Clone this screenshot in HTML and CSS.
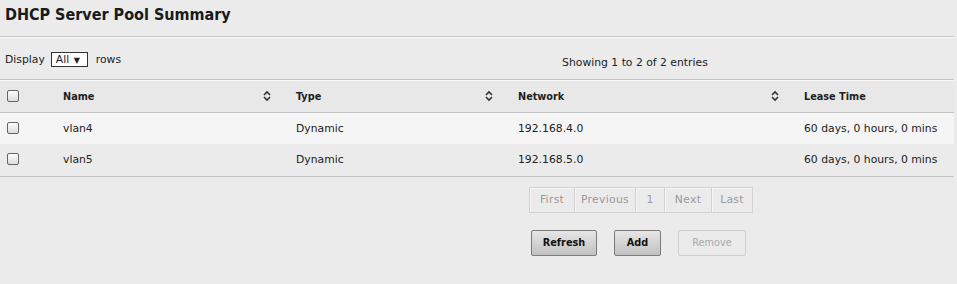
FILE: index.html
```html
<!DOCTYPE html>
<html>
<head lang="en">
    <meta charset="UTF-8">
    <title>DHCP Server Pool Summary</title>
    <link rel="stylesheet" href="styles.css">
</head>
<body>
<div class="page">
    <h1 class="title">DHCP Server Pool Summary</h1>

    <div class="toolbar">
        <div class="length">
            Display
            <span class="select">All <span class="caret">&#9660;</span></span>
            rows
        </div>
        <div class="info">Showing 1 to 2 of 2 entries</div>
    </div>

    <table class="grid">
        <colgroup>
            <col class="c-check">
            <col class="c-name">
            <col class="c-type">
            <col class="c-net">
            <col class="c-lease">
        </colgroup>
        <thead>
        <tr>
            <th><span class="box"></span></th>
            <th>Name
                <svg class="sort" width="8" height="12" viewBox="0 0 8 12"><path d="M1 5 L4 2 L7 5 M1 7 L4 10 L7 7" fill="none" stroke="#333" stroke-width="1.6"/></svg>
            </th>
            <th>Type
                <svg class="sort" width="8" height="12" viewBox="0 0 8 12"><path d="M1 5 L4 2 L7 5 M1 7 L4 10 L7 7" fill="none" stroke="#333" stroke-width="1.6"/></svg>
            </th>
            <th>Network
                <svg class="sort" width="8" height="12" viewBox="0 0 8 12"><path d="M1 5 L4 2 L7 5 M1 7 L4 10 L7 7" fill="none" stroke="#333" stroke-width="1.6"/></svg>
            </th>
            <th>Lease Time</th>
        </tr>
        </thead>
        <tbody>
        <tr class="odd">
            <td><span class="box"></span></td>
            <td>vlan4</td>
            <td>Dynamic</td>
            <td>192.168.4.0</td>
            <td>60 days, 0 hours, 0 mins</td>
        </tr>
        <tr class="even">
            <td><span class="box"></span></td>
            <td>vlan5</td>
            <td>Dynamic</td>
            <td>192.168.5.0</td>
            <td>60 days, 0 hours, 0 mins</td>
        </tr>
        </tbody>
    </table>

    <div class="pager">
        <span class="p-first">First</span>
        <span class="p-prev">Previous</span>
        <span class="p-num">1</span>
        <span class="p-next">Next</span>
        <span class="p-last">Last</span>
    </div>

    <div class="actions">
        <button class="btn b-refresh">Refresh</button>
        <button class="btn b-add">Add</button>
        <button class="btn b-remove disabled">Remove</button>
    </div>
</div>
</body>
</html>
```

FILE: styles.css
```css
* {
    padding: 0;
    margin: 0;
    box-sizing: border-box;
}

body {
    background-color: #ebebeb;
    font-family: "DejaVu Sans", Verdana, sans-serif;
    font-size: 10.8px;
    color: #222;
}

.page {
    width: 954px;
    height: 284px;
    background-color: #ebebeb;
}

.title {
    font-size: 16px;
    font-weight: bold;
    font-stretch: condensed;
    color: #1a1a1a;
    height: 37px;
    line-height: 30px;
    padding-left: 5px;
    border-bottom: 1px solid #c4c4c4;
    box-shadow: 0 1px 0 #fafafa;
}

.toolbar {
    display: flex;
    align-items: center;
    height: 43px;
    padding-left: 5px;
    border-bottom: 1px solid #c4c4c4;
    box-shadow: 0 1px 0 #fafafa;
}

.length {
    display: flex;
    align-items: center;
    gap: 8px;
    margin-top: 2px;
}

.select {
    display: inline-block;
    width: 37px;
    height: 15px;
    line-height: 13px;
    border: 1px solid #333;
    background-color: #fff;
    padding-left: 4px;
    margin-left: -2px;
}

.caret {
    font-size: 8px;
    margin-left: 1px;
}

.info {
    margin-left: 441px;
    margin-top: 8px;
}

.grid {
    width: 954px;
    border-collapse: collapse;
    table-layout: fixed;
    margin-top: 1px;
}

.c-check { width: 45px; }
.c-name { width: 233px; }
.c-type { width: 222px; }
.c-net { width: 286px; }
.c-lease { width: 168px; }

.grid th,
.grid td {
    text-align: left;
    padding-left: 18px;
    white-space: nowrap;
}

.grid th:first-child,
.grid td:first-child {
    padding-left: 7px;
}

.grid th {
    height: 31px;
    font-weight: bold;
    font-stretch: condensed;
    background-color: #e8e8e8;
    border-bottom: 1px solid #c4c4c4;
    position: relative;
}

.grid td {
    height: 32px;
}

.grid tr.odd td {
    background-color: #f5f5f5;
}

.grid tr.even td {
    background-color: #ebebeb;
    border-bottom: 1px solid #c4c4c4;
}

.sort {
    position: absolute;
    right: 7px;
    top: 9px;
}

.box {
    display: inline-block;
    width: 12px;
    height: 12px;
    border: 1px solid #666;
    border-radius: 2px;
    background: linear-gradient(#fdfdfd, #dcdcdc);
    vertical-align: middle;
    margin-top: -2px;
}

.pager {
    display: flex;
    width: 224px;
    height: 26px;
    margin: 10px 0 0 529px;
    border: 1px solid #d2d2d2;
}

.pager span {
    line-height: 24px;
    text-align: center;
    color: #9a9a9a;
    letter-spacing: 0.3px;
    border-left: 1px solid #d2d2d2;
    box-shadow: inset 1px 1px 0 #f6f6f6;
}

.pager span:first-child {
    border-left: none;
}

.p-first { width: 44px; }
.p-prev { width: 61px; }
.p-num { width: 29px; }
.p-next { width: 47px; }
.p-last { width: 41px; }

.actions {
    display: flex;
    gap: 17px;
    margin: 17px 0 0 531px;
}

.btn {
    height: 26px;
    font-family: "DejaVu Sans", Verdana, sans-serif;
    font-size: 10.8px;
    font-weight: bold;
    font-stretch: condensed;
    color: #111;
    border: 1px solid #7a7a7a;
    border-radius: 2px;
    background: linear-gradient(#e6e6e6, #c2c2c2);
}

.b-refresh { width: 66px; }
.b-add { width: 47px; }
.b-remove { width: 68px; }

.btn.disabled {
    font-weight: normal;
    color: #aaa;
    border-color: #cfcfcf;
    background: #ebebeb;
}
```
